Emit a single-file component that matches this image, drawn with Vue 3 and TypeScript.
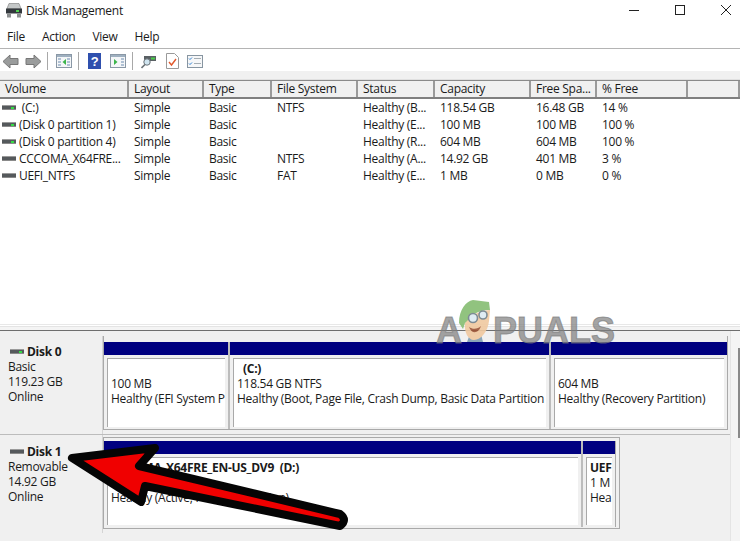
<script setup lang="ts">
const menus: string[] = ['File', 'Action', 'View', 'Help']
const heads: string[] = ['Volume', 'Layout', 'Type', 'File System', 'Status', 'Capacity', 'Free Spa...', '% Free', '']
const rows: { led: boolean; cells: string[] }[] = [
  { led: true, cells: [' (C:)', 'Simple', 'Basic', 'NTFS', 'Healthy (B...', '118.54 GB', '16.48 GB', '14 %'] },
  { led: true, cells: ['(Disk 0 partition 1)', 'Simple', 'Basic', '', 'Healthy (E...', '100 MB', '100 MB', '100 %'] },
  { led: true, cells: ['(Disk 0 partition 4)', 'Simple', 'Basic', '', 'Healthy (R...', '604 MB', '604 MB', '100 %'] },
  { led: false, cells: ['CCCOMA_X64FRE...', 'Simple', 'Basic', 'NTFS', 'Healthy (A...', '14.92 GB', '401 MB', '3 %'] },
  { led: false, cells: ['UEFI_NTFS', 'Simple', 'Basic', 'FAT', 'Healthy (E...', '1 MB', '0 MB', '0 %'] },
]
</script>

<template>
  <div class="win">
    <header class="title">
      <svg class="appicon" width="18" height="15" viewBox="0 0 18 15">
        <path d="M4 .5h10l2 5H2z" fill="#c4c7c7" stroke="#777" stroke-width=".6" />
        <rect x="1" y="5.500" width="16" height="5" fill="#33383c" />
        <rect x="11" y="7" width="3" height="2" fill="#4fd04f" />
        <rect x="2" y="10.500" width="4" height="4" fill="#8c8f90" />
        <rect x="12" y="10.500" width="4" height="4" fill="#8c8f90" />
      </svg>
      <span class="title-text">Disk Management</span>
      <div class="caption">
        <svg width="12" height="12" viewBox="0 0 12 12"><path d="M1 6.500h10" stroke="#222" stroke-width="1" /></svg>
        <svg width="12" height="12" viewBox="0 0 12 12"><rect x="1.500" y="1.500" width="9" height="9" fill="none" stroke="#222" /></svg>
        <svg width="12" height="12" viewBox="0 0 12 12"><path d="M1 1l10 10M11 1L1 11" stroke="#222" /></svg>
      </div>
    </header>

    <nav class="menu">
      <span v-for="m in menus" :key="m">{{ m }}</span>
    </nav>

    <div class="toolbar">
      <svg width="17" height="15" viewBox="0 0 17 15"><path d="M1 7.500L8 1v3.500h8v6H8V14z" fill="#9a9c9c" stroke="#777" /></svg>
      <svg class="next" width="17" height="15" viewBox="0 0 17 15"><path d="M16 7.500L9 1v3.500H1v6h8V14z" fill="#9a9c9c" stroke="#777" /></svg>
      <i class="sep s1"></i>
      <svg class="t1" width="16" height="14" viewBox="0 0 16 14">
        <rect x=".5" y=".5" width="15" height="13" fill="#f4f6f8" stroke="#8a98a6" />
        <rect x="1" y="1" width="14" height="2" fill="#9fb0c0" />
        <path d="M2 5h3M2 8h3M2 11h3M11 5h3M11 8h3M11 11h3" stroke="#6d8cb0" />
        <path d="M10 5v6L6.500 8z" fill="#3bb54a" />
      </svg>
      <i class="sep s2"></i>
      <svg class="help" width="13" height="16" viewBox="0 0 13 16">
        <rect width="13" height="16" fill="#2f50ae" />
        <text x="6.500" y="13" text-anchor="middle" class="q">?</text>
      </svg>
      <svg class="t2" width="16" height="14" viewBox="0 0 16 14">
        <rect x=".5" y=".5" width="15" height="13" fill="#f4f6f8" stroke="#8a98a6" />
        <rect x="1" y="1" width="14" height="2" fill="#9fb0c0" />
        <path d="M11 5h3M11 8h3M11 11h3" stroke="#6d8cb0" />
        <path d="M4 5v6l3.500-3z" fill="#3bb54a" />
      </svg>
      <i class="sep s3"></i>
      <svg class="t3" width="16" height="15" viewBox="0 0 16 15">
        <path d="M3 2h12v5H3z" fill="#5a6064" />
        <rect x="10" y="3.500" width="4" height="2" fill="#49d049" />
        <circle cx="6" cy="8" r="3.200" fill="#cfe4ef" stroke="#6b7378" />
        <path d="M4 10.500L.5 14" stroke="#6b7378" stroke-width="1.600" />
      </svg>
      <svg class="t4" width="13" height="16" viewBox="0 0 13 16">
        <path d="M.5.500h8l4 4v11H.5z" fill="#fff" stroke="#9a9a9a" />
        <path d="M3 9l2.500 3L10 6" fill="none" stroke="#e2592c" stroke-width="1.400" />
      </svg>
      <svg class="t5" width="16" height="13" viewBox="0 0 16 13">
        <rect x=".5" y=".5" width="15" height="12" fill="#f6f7f8" stroke="#8795a1" />
        <path d="M2 3.500l1 1 2-2M2 8.500l1 1 2-2" fill="none" stroke="#2c7fd3" />
        <path d="M7 3.500h7M7 8.500h7" stroke="#a4adb4" />
      </svg>
    </div>

    <div class="band"></div>

    <section class="list">
      <div class="hrow">
        <div v-for="(h, i) in heads" :key="i" class="hcell">{{ h }}</div>
      </div>
      <div v-for="r in rows" :key="r.cells[0]" class="row">
        <div v-for="(c, i) in r.cells" :key="i" class="cell">
          <span v-if="i === 0" class="drive" :class="{ lit: r.led }"></span>
          <span class="val">{{ c }}</span>
        </div>
      </div>
    </section>

    <div class="splitter"></div>

    <section class="disks">
      <div class="disk">
        <div class="label">
          <div class="dname"><span class="drive lit"></span><b>Disk 0</b></div>
          <div>Basic</div>
          <div>119.23 GB</div>
          <div>Online</div>
        </div>
        <div class="parts p0">
          <div class="part">
            <div class="bar"></div>
            <div class="inner">
              <div>&nbsp;</div>
              <div>100 MB</div>
              <div>Healthy (EFI System P</div>
            </div>
          </div>
          <div class="part">
            <div class="bar"></div>
            <div class="inner">
              <div class="boot"><b>(C:)</b></div>
              <div>118.54 GB NTFS</div>
              <div>Healthy (Boot, Page File, Crash Dump, Basic Data Partition</div>
            </div>
          </div>
          <div class="part">
            <div class="bar"></div>
            <div class="inner">
              <div>&nbsp;</div>
              <div>604 MB</div>
              <div>Healthy (Recovery Partition)</div>
            </div>
          </div>
        </div>
      </div>
      <div class="disk second">
        <div class="label">
          <div class="dname"><span class="drive"></span><b>Disk 1</b></div>
          <div>Removable</div>
          <div>14.92 GB</div>
          <div>Online</div>
        </div>
        <div class="parts p1">
          <div class="part">
            <div class="bar"></div>
            <div class="inner">
              <div><b>CCCOMA_X64FRE_EN-US_DV9&nbsp; (D:)</b></div>
              <div>14.92 GB NTFS</div>
              <div>Healthy (Active, Primary Partition)</div>
            </div>
          </div>
          <div class="part">
            <div class="bar"></div>
            <div class="inner">
              <div><b>UEF</b></div>
              <div>1 M</div>
              <div>Hea</div>
            </div>
          </div>
        </div>
      </div>
      <div class="scroll"><div class="thumb"></div></div>
    </section>

    <div class="mark">
      <span>A</span>
      <svg class="mascot" width="34" height="44" viewBox="0 0 34 44">
        <path d="M12 36h11l2 8H9z" fill="#7f9db3" />
        <path d="M7 25c2-7 14-12 25-13l-1 11c-1 10-8 19-15 19-6 0-10-8-9-17z" fill="#f0c9a0" />
        <path d="M1 25C1 12 8 3 15 2l16 2 1 8c-7 0-13 2-17 5l-8 8-2 6z" fill="#86bd72" />
        <circle cx="15" cy="20" r="4.500" fill="#dcebf2" stroke="#6f7f89" stroke-width="1.600" />
        <circle cx="25" cy="17" r="4" fill="#dcebf2" stroke="#6f7f89" stroke-width="1.600" />
        <path d="M11 29c4 3 9 2 12-1-2 7-9 9-12 1z" fill="#9c5436" />
      </svg>
      <span class="rest">PUALS</span>
    </div>

    <svg class="arrow" width="740" height="541" viewBox="0 0 740 541">
      <path
        d="M72 458L155 448L139 466L340 514Q348 520 340 526L145 486L141 502Z"
        fill="#f00000"
        stroke="#050505"
        stroke-width="8"
        stroke-linejoin="round"
      />
    </svg>
  </div>
</template>

<style>
body { margin: 0; background: #fff; }
</style>

<style scoped>
.win {
  position: relative;
  width: 740px;
  height: 541px;
  overflow: hidden;
  display: flex;
  flex-direction: column;
  background: #fff;
  color: #1a1a1a;
  font: 12px/15px "Open Sans", "Noto Sans", sans-serif;
  letter-spacing: -0.28px;
}
.title {
  height: 20px;
  display: flex;
  align-items: center;
  padding-left: 5px;
}
.title-text { margin-left: 3px; }
.caption {
  margin-left: auto;
  margin-right: 8px;
  display: flex;
  gap: 34px;
}
.menu {
  height: 24px;
  padding: 4px 0 0 7px;
  display: flex;
  align-items: center;
  gap: 17px;
  border-bottom: 1px solid #b4b4b4;
}
.toolbar {
  height: 20px;
  padding: 2px 0 0 2px;
  display: flex;
  align-items: center;
}
.next { margin-left: 6px; }
.sep { width: 1px; height: 18px; background: #a8a8a8; }
.s1 { margin-left: 5px; }
.t1 { margin-left: 8px; }
.s2 { margin-left: 6px; }
.help { margin-left: 9px; }
.q { font: bold 13px "Liberation Sans", sans-serif; fill: #fff; }
.t2 { margin-left: 9px; }
.s3 { margin-left: 6px; }
.t3 { margin-left: 8px; }
.t4 { margin-left: 9px; }
.t5 { margin-left: 8px; }
.band { height: 8px; background: #f0f0f0; border-bottom: 1px solid #e0e0e0; }
.list { height: 244px; overflow: hidden; }
.hrow, .row {
  display: grid;
  grid-template-columns: 129px 75px 68px 86px 77px 96px 66px 91px 52px;
}
.hrow {
  height: 19px;
  background: #f0f0f0;
  border-top: 1px solid #8a8a8a;
  border-bottom: 2px solid #7f7f7f;
  box-sizing: border-box;
}
.hcell {
  padding-left: 5px;
  border-right: 2px solid #9a9a9a;
  line-height: 16px;
  white-space: nowrap;
}
.row { height: 17px; line-height: 17px; }
.cell {
  padding-left: 5px;
  white-space: pre;
  overflow: hidden;
  display: flex;
  align-items: center;
}
.cell:first-child { padding-left: 2px; }
.drive {
  position: relative;
  flex: none;
  display: inline-block;
  width: 14px;
  height: 5px;
  margin-right: 3px;
  background: linear-gradient(#9a9a9a 0 1px, #55595c 1px 4px, #8a8a8a 4px);
}
.drive.lit::after {
  content: "";
  position: absolute;
  right: 2px;
  top: 2px;
  width: 3px;
  height: 2px;
  background: #33dd44;
}
.splitter {
  height: 7px;
  background: linear-gradient(#e8e8e8 0 1px, #fff 1px 2px, #e4e4e4 2px 3px, #f4f4f4 3px 6px, #6e6e6e 6px);
}
.disks {
  position: relative;
  flex: 1;
  background: #f0f0f0;
  padding-top: 5px;
}
.disk {
  display: flex;
  align-items: flex-start;
  width: 730px;
  height: 99px;
  box-sizing: border-box;
  border-bottom: 1px solid #bcbcbc;
}
.second { height: auto; border-bottom: none; }
.label {
  width: 103px;
  height: 98px;
  flex: none;
  box-sizing: border-box;
  padding: 8px 0 0 8px;
  border-right: 1px solid #d4d4d4;
}
.second .label { padding-top: 9px; height: 98px; }
.dname { display: flex; align-items: center; margin-left: 2px; }
.parts {
  display: grid;
  flex: none;
  box-sizing: border-box;
  border: 1px solid #a9a9a9;
  border-top: none;
}
.p0 {
  width: 625px;
  height: 94px;
  padding-top: 6px;
  grid-template-columns: 126px 321px 1fr;
}
.p1 {
  width: 517px;
  height: 92px;
  margin-top: 2px;
  padding: 3px 3px 1px 0;
  border-top: 1px solid #a9a9a9;
  grid-template-columns: 479px 1fr;
}
.part {
  min-width: 0;
  border-right: 2px solid #bcbcbc;
  display: flex;
  flex-direction: column;
}
.p0 .part:last-child { border-right: none; }
.p1 .part:last-child { border-right: 1px solid #a9a9a9; }
.bar { height: 13px; background: #000080; flex: none; }
.inner {
  flex: 1;
  margin: 3px 3px 2px 3px;
  padding: 2px 0 0 3px;
  background: #fff;
  border-top: 1px solid #a9a9a9;
  border-left: 1px solid #a9a9a9;
  white-space: nowrap;
  overflow: hidden;
  line-height: 15px;
}
.boot { padding-left: 6px; }
.scroll {
  position: absolute;
  top: 0;
  right: 0;
  bottom: 0;
  width: 10px;
  background: #f4f4f4;
  border-left: 1px solid #e4e4e4;
  box-sizing: border-box;
}
.thumb {
  position: absolute;
  left: 7px;
  right: 0;
  top: 17px;
  height: 90px;
  background: #8a8a8a;
}
.mark {
  position: absolute;
  left: 436px;
  top: 298px;
  display: flex;
  align-items: flex-end;
  height: 44px;
  font: bold 36px/36px "Liberation Sans", sans-serif;
  letter-spacing: 0;
  color: rgba(125, 125, 125, 0.7);
  -webkit-text-stroke: 1px rgba(125, 125, 125, 0.7);
}
.mark span { position: relative; top: 7px; }
.mascot { margin-left: -4px; opacity: .9; }
.rest { margin-left: 1px; }
.arrow { position: absolute; inset: 0; pointer-events: none; }
</style>
